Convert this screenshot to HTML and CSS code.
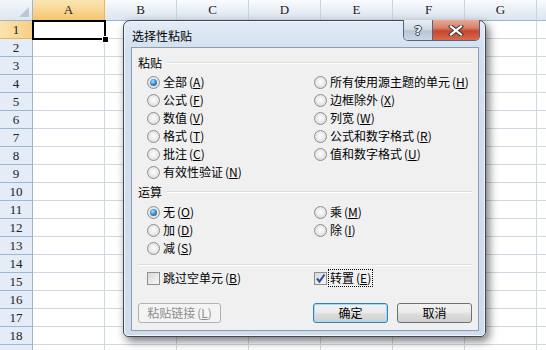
FILE: index.html
```html
<!DOCTYPE html>
<html lang="zh-CN">
<head>
    <meta charset="UTF-8">
    <title>选择性粘贴</title>
    <link rel="stylesheet" href="styles.css">
</head>
<body>
<div class="sheet">
    <div class="corner"><span class="corner-tri"></span></div>
    <div class="colheads">
        <div class="colhead selected">A</div>
        <div class="colhead">B</div>
        <div class="colhead">C</div>
        <div class="colhead">D</div>
        <div class="colhead">E</div>
        <div class="colhead">F</div>
        <div class="colhead">G</div>
        <div class="colhead"></div>
    </div>
    <div class="rowheads">
        <div class="rowhead selected">1</div>
        <div class="rowhead">2</div>
        <div class="rowhead">3</div>
        <div class="rowhead">4</div>
        <div class="rowhead">5</div>
        <div class="rowhead">6</div>
        <div class="rowhead">7</div>
        <div class="rowhead">8</div>
        <div class="rowhead">9</div>
        <div class="rowhead">10</div>
        <div class="rowhead">11</div>
        <div class="rowhead">12</div>
        <div class="rowhead">13</div>
        <div class="rowhead">14</div>
        <div class="rowhead">15</div>
        <div class="rowhead">16</div>
        <div class="rowhead">17</div>
        <div class="rowhead">18</div>
        <div class="rowhead"></div>
    </div>
    <div class="cells">
        <div class="active-cell"><span class="fill-handle"></span></div>
    </div>
</div>

<div class="dialog">
    <div class="titlebar">
        <span class="title">选择性粘贴</span>
        <div class="caption-btns">
            <span class="cap-help">?</span>
            <span class="cap-close">
                <svg width="16" height="11" viewBox="0 0 16 11">
                    <path d="M3 1.5 L13 9.5 M13 1.5 L3 9.5" stroke="#3b3b3b" stroke-width="4.2" stroke-linecap="square"/>
                    <path d="M3 1.5 L13 9.5 M13 1.5 L3 9.5" stroke="#ffffff" stroke-width="2.2" stroke-linecap="square"/>
                </svg>
            </span>
        </div>
    </div>

    <div class="client">
        <div class="group-head"><span>粘贴</span><span class="rule"></span></div>
        <div class="opts">
            <div class="opt"><span class="radio on"></span>全部<span class="key">(<u>A</u>)</span></div>
            <div class="opt"><span class="radio"></span>所有使用源主题的单元<span class="key">(<u>H</u>)</span></div>
            <div class="opt"><span class="radio"></span>公式<span class="key">(<u>F</u>)</span></div>
            <div class="opt"><span class="radio"></span>边框除外<span class="key">(<u>X</u>)</span></div>
            <div class="opt"><span class="radio"></span>数值<span class="key">(<u>V</u>)</span></div>
            <div class="opt"><span class="radio"></span>列宽<span class="key">(<u>W</u>)</span></div>
            <div class="opt"><span class="radio"></span>格式<span class="key">(<u>T</u>)</span></div>
            <div class="opt"><span class="radio"></span>公式和数字格式<span class="key">(<u>R</u>)</span></div>
            <div class="opt"><span class="radio"></span>批注<span class="key">(<u>C</u>)</span></div>
            <div class="opt"><span class="radio"></span>值和数字格式<span class="key">(<u>U</u>)</span></div>
            <div class="opt"><span class="radio"></span>有效性验证<span class="key">(<u>N</u>)</span></div>
        </div>

        <div class="group-head second"><span>运算</span><span class="rule"></span></div>
        <div class="opts">
            <div class="opt"><span class="radio on"></span>无<span class="key">(<u>O</u>)</span></div>
            <div class="opt"><span class="radio"></span>乘<span class="key">(<u>M</u>)</span></div>
            <div class="opt"><span class="radio"></span>加<span class="key">(<u>D</u>)</span></div>
            <div class="opt"><span class="radio"></span>除<span class="key">(<u>I</u>)</span></div>
            <div class="opt"><span class="radio"></span>减<span class="key">(<u>S</u>)</span></div>
        </div>

        <div class="separator"></div>

        <div class="opts checks">
            <div class="opt"><span class="check"></span>跳过空单元<span class="key">(<u>B</u>)</span></div>
            <div class="opt">
                <span class="check on">
                    <svg width="11" height="11" viewBox="0 0 11 11">
                        <path d="M2 5.5 L4.5 8.5 L9.5 1.5" fill="none" stroke="#2b4e94" stroke-width="2"/>
                    </svg>
                </span>
                <span class="focus">转置<span class="key">(<u>E</u>)</span></span>
            </div>
        </div>

        <div class="buttons">
            <span class="btn disabled">粘贴链接<span class="key">(<u>L</u>)</span></span>
            <span class="btn default">确定</span>
            <span class="btn">取消</span>
        </div>
    </div>
</div>
</body>
</html>
```

FILE: styles.css
```css
body {
    margin: 0;
    width: 546px;
    height: 350px;
    overflow: hidden;
    position: relative;
    background: #fff;
    font-family: "Noto Sans CJK SC", "Noto Sans", sans-serif;
    font-size: 12px;
    color: #000;
}

/* spreadsheet behind the dialog */
.sheet {
    display: grid;
    grid-template-columns: 33px 513px;
    grid-template-rows: 21px 329px;
    width: 546px;
    height: 350px;
    overflow: hidden;
}
.corner {
    position: relative;
    box-sizing: border-box;
    border-right: 1px solid #9eb6ce;
    border-bottom: 1px solid #9eb6ce;
    background: linear-gradient(#f4f7fb, #dfe6f0);
}
.corner-tri {
    position: absolute;
    right: 3px;
    bottom: 3px;
    width: 0;
    height: 0;
    border-left: 10px solid transparent;
    border-bottom: 10px solid #b8c7d9;
}
.colheads {
    display: flex;
}
.colhead, .rowhead {
    font-family: "Liberation Serif", serif;
    font-size: 13px;
    color: #222;
    box-sizing: border-box;
    display: flex;
    align-items: center;
    justify-content: center;
}
.colhead {
    flex: 0 0 72px;
    height: 21px;
    border-right: 1px solid #c9d4e2;
    border-bottom: 1px solid #9eb6ce;
    background: linear-gradient(#f9fbfd, #e8eef6 55%, #dde5f0);
}
.colhead.selected {
    background: linear-gradient(#fbe5b5, #f8d58f 55%, #f2c66c);
    border-bottom-color: #f29536;
    border-right-color: #e9b55d;
}
.rowheads {
    display: flex;
    flex-direction: column;
}
.rowhead {
    flex: 0 0 18px;
    width: 33px;
    padding-top: 1px;
    border-right: 1px solid #9eb6ce;
    border-bottom: 1px solid #9eb6ce;
    background: #e4ecf7;
}
.rowhead.selected {
    background: linear-gradient(90deg, #fbe3af, #f6cf86);
    border-right-color: #f29536;
    border-bottom-color: #e9b55d;
}
.cells {
    position: relative;
    background-color: #fff;
    background-image:
        linear-gradient(to right, transparent 71px, #d0d7e5 71px),
        linear-gradient(to bottom, transparent 17px, #d0d7e5 17px);
    background-size: 72px 18px;
}
.active-cell {
    position: absolute;
    left: -1px;
    top: -1px;
    width: 74px;
    height: 20px;
    box-sizing: border-box;
    border: 2px solid #000;
}
.fill-handle {
    position: absolute;
    right: -5px;
    bottom: -5px;
    width: 5px;
    height: 5px;
    background: #000;
    border: 1px solid #fff;
}

/* dialog window */
.dialog {
    position: absolute;
    left: 123px;
    top: 20px;
    width: 363px;
    height: 317px;
    box-sizing: border-box;
    padding: 0 6px 5px 7px;
    display: flex;
    flex-direction: column;
    border: 1px solid #3d4857;
    border-radius: 7px 7px 5px 5px;
    background: linear-gradient(#e3ecf7, #d2dfee 30px, #cfdcec);
    box-shadow: inset 0 0 0 1px #f2f6fb, 3px 4px 10px rgba(0, 0, 0, 0.55);
}
.titlebar {
    height: 26px;
    display: flex;
    align-items: flex-start;
}
.title {
    margin: 6px 0 0 1px;
    line-height: 17px;
}
.caption-btns {
    margin: -1px -1px 0 auto;
    display: flex;
    height: 20px;
    border: 1px solid #56667a;
    border-top: none;
    border-radius: 0 0 5px 5px;
    overflow: hidden;
}
.cap-help {
    width: 28px;
    display: flex;
    align-items: center;
    justify-content: center;
    border-right: 1px solid #56667a;
    background: linear-gradient(#e6edf5, #d2dce8 45%, #b8c6d7 55%, #c9d6e4);
    font-family: "DejaVu Sans", sans-serif;
    font-weight: bold;
    font-size: 13px;
    color: #f4f6f9;
    text-shadow: 1px 0 0 #3a3f47, -1px 0 0 #3a3f47, 0 1px 0 #3a3f47, 0 -1px 0 #3a3f47;
}
.cap-close {
    width: 46px;
    display: flex;
    align-items: center;
    justify-content: center;
    background: linear-gradient(#e9a99a, #d98068 40%, #c6462d 55%, #d66a4f);
}
.cap-close svg {
    display: block;
}

.client {
    flex: 1;
    box-sizing: border-box;
    border: 1px solid #8c9db3;
    background: #f0f0f0;
    padding: 8px 6px 0 6px;
}
.group-head {
    display: flex;
    align-items: center;
    height: 14px;
    line-height: 14px;
}
.group-head.second {
    margin-top: 4px;
}
.rule {
    flex: 1;
    margin-left: 5px;
    height: 1px;
    background: #d5dfe5;
    border-bottom: 1px solid #fff;
}
.opts {
    display: grid;
    grid-template-columns: 167px 1fr;
    grid-auto-rows: 18px;
    margin-top: 3px;
    padding-left: 9px;
}
.group-head.second + .opts {
    margin-top: 4px;
}
.opt {
    display: flex;
    align-items: center;
    white-space: nowrap;
    line-height: 16px;
}
.key {
    margin-left: 2px;
}
.key u {
    text-underline-offset: 1px;
}
.radio {
    flex: 0 0 13px;
    height: 13px;
    margin-right: 3px;
    box-sizing: border-box;
    border-radius: 50%;
    border: 1px solid #8e8f8f;
    background: radial-gradient(circle at 50% 45%, #fdfdfd 0, #ececec 45%, #cfcfcf 100%);
    display: flex;
    align-items: center;
    justify-content: center;
}
.radio.on::after {
    content: "";
    width: 7px;
    height: 7px;
    border-radius: 50%;
    background: radial-gradient(circle at 40% 35%, #b9e4fc 0, #3b8fd3 45%, #16508a 100%);
}
.separator {
    margin-top: 7px;
    height: 1px;
    background: #d5dfe5;
    border-bottom: 1px solid #fff;
}
.checks {
    margin-top: 3px;
}
.check {
    flex: 0 0 13px;
    height: 13px;
    margin-right: 3px;
    box-sizing: border-box;
    border: 1px solid #8e8f8f;
    background: linear-gradient(135deg, #d9d9d9, #f7f7f7);
    display: flex;
    align-items: center;
    justify-content: center;
}
.focus {
    margin-left: -2px;
    padding: 0 1px;
    border: 1px dotted #000;
    line-height: 16px;
}
.buttons {
    display: flex;
    margin-top: 16px;
}
.btn {
    height: 20px;
    width: 75px;
    box-sizing: border-box;
    border: 1px solid #707070;
    border-radius: 3px;
    background: linear-gradient(#f2f2f2, #ebebeb 45%, #dddddd 55%, #cfcfcf);
    display: flex;
    align-items: center;
    justify-content: center;
    line-height: 16px;
}
.btn.disabled {
    width: 83px;
    margin-right: auto;
    border-color: #adb2b5;
    background: #f4f4f4;
    color: #8d8d8d;
}
.btn.default {
    margin-right: 9px;
    border-color: #3c7fb1;
    box-shadow: inset 0 0 0 1px #a4dcf6;
}
```
